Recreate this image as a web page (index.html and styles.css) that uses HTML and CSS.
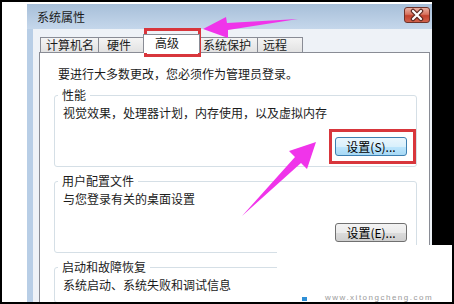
FILE: index.html
```html
<!DOCTYPE html>
<html lang="zh-CN">
<head>
	<meta charset="UTF-8">
	<title>系统属性</title>
	<link rel="stylesheet" href="styles.css">
</head>
<body>
	<div class="shot">
		<div class="canvas">
			<div class="gutter"></div>

			<div class="window">
				<div class="titlebar">
					<span class="title">系统属性</span>
					<span class="close">
						<svg width="24" height="14" viewBox="0 0 24 14">
							<path d="M8 3 L16 11 M16 3 L8 11" stroke="#5b2720" stroke-width="4.5" stroke-linecap="round"/>
							<path d="M8 3 L16 11 M16 3 L8 11" stroke="#fff" stroke-width="2.2" stroke-linecap="round"/>
						</svg>
					</span>
				</div>

				<div class="body">
					<div class="tabs">
						<span class="tab t1">计算机名</span>
						<span class="tab t2">硬件</span>
						<span class="tab on">高级</span>
						<span class="tab t4">系统保护</span>
						<span class="tab t5">远程</span>
					</div>

					<div class="panel">
						<p class="intro">要进行大多数更改，您必须作为管理员登录。</p>

						<fieldset class="group">
							<legend>性能</legend>
							<p>视觉效果，处理器计划，内存使用，以及虚拟内存</p>
							<button class="btn hot">设置(S)...</button>
						</fieldset>

						<fieldset class="group">
							<legend>用户配置文件</legend>
							<p>与您登录有关的桌面设置</p>
							<button class="btn">设置(E)...</button>
						</fieldset>

						<fieldset class="group">
							<legend>启动和故障恢复</legend>
							<p>系统启动、系统失败和调试信息</p>
						</fieldset>
					</div>
				</div>
			</div>

			<div class="desk"></div>

			<!-- annotations drawn on top of the screenshot -->
			<div class="mark m1"></div>
			<div class="mark m2"></div>

			<svg class="arrows" width="450" height="300" viewBox="2 2 450 300">
				<polygon points="203,29 226,17 227,23 298,19 228,30 228,38" fill="#f034ea"/>
				<polygon points="316,142 307,169 301,163 242,216 295,157 289,151" fill="#f034ea"/>
			</svg>

			<div class="stamp">
				<span class="logo"></span>
				<span class="site">www.xitongcheng.com</span>
			</div>
		</div>
	</div>
</body>
</html>
```

FILE: styles.css
```css
* {
	box-sizing: border-box;
}
body {
	margin: 0;
	background: #000;
	font: 12px/14px "Noto Sans CJK SC", sans-serif;
	color: #1b1b1b;
}
p {
	margin: 0;
}

.shot { width: 454px; height: 304px; padding: 2px; background: #000; }
.canvas { position: relative; width: 450px; height: 300px; background: #fff; display: flex; overflow: hidden; }
.gutter { width: 25px; flex: none; }
.desk { flex: 1; background: #000; }

.window { width: 405px; flex: none; margin-top: 2px; display: flex; flex-direction: column; }

.titlebar {
	height: 25px;
	flex: none;
	display: flex;
	justify-content: space-between;
	align-items: flex-start;
	padding: 0 2px 0 10px;
	background: linear-gradient(#a7bfd9, #c5d7eb);
}
.title { margin-top: 6px; }
.close {
	width: 26px;
	height: 16px;
	margin-top: 3px;
	display: flex;
	align-items: center;
	justify-content: center;
	border: 1px solid #6e3229;
	border-radius: 3px;
	background: linear-gradient(#eab0a2, #d7735f 45%, #c2412d 55%, #d0624c);
}

.body {
	flex: 1;
	display: flex;
	flex-direction: column;
	background: #eef2f7;
	border-left: 6px solid #b8cee6;
	padding: 0 2px 0 6px;
}

.tabs { display: flex; align-items: flex-end; padding: 5px 0 0 1px; }
.tab {
	height: 15px;
	border: 1px solid #898c95;
	border-bottom: 0;
	margin-left: -1px;
	background: linear-gradient(#f4f4f4, #e2e2e2);
	white-space: nowrap;
}
.t1 { width: 59px; margin-left: 0; padding-left: 5px; }
.t2 { width: 47px; padding-left: 8px; }
.t4 { width: 60px; margin-left: -2px; padding-left: 4px; }
.t5 { width: 46px; padding-left: 5px; }
.tab.on {
	position: relative;
	z-index: 1;
	width: 57px;
	height: 19px;
	margin: 0 0 -1px -2px;
	padding: 1px 0 0 11px;
	background: #fff;
}

.panel {
	flex: 1;
	background: #fff;
	border: 1px solid #898c95;
	padding: 14px 12px 0 14px;
}
.intro { margin-left: 4px; }

.group {
	margin: 7px 0 0;
	padding: 4px 9px 10px 8px;
	border: 1px solid #d5dfe6;
	border-radius: 3px;
	min-width: 0;
}
.group legend { padding: 0 4px; margin-left: -5px; }

.btn {
	display: block;
	width: 72px;
	height: 19px;
	margin: 17px 0 0 auto;
	padding: 0;
	font: inherit;
	line-height: 17px;
	color: #000;
	border: 1px solid #707070;
	border-radius: 3px;
	background: linear-gradient(#f3f3f3, #ebebeb 50%, #dcdcdc 50%, #cfcfcf);
}
.btn.hot {
	border-color: #3c7fb1;
	background: linear-gradient(#eaf6fd, #d9f0fc 50%, #bee6fd 50%, #a7d9f5);
}

.mark { position: absolute; border: 3px solid #d8363c; }
.m1 { left: 142px; top: 26px; width: 57px; height: 29px; }
.m2 { left: 327px; top: 127px; width: 87px; height: 35px; }

.arrows { position: absolute; left: 0; top: 0; }

.stamp {
	position: absolute;
	left: 275px;
	top: 243px;
	right: 0;
	bottom: 0;
	background: #fff;
	display: flex;
	align-items: flex-start;
	padding: 48px 0 0 25px;
	gap: 18px;
}
.logo { width: 5px; height: 4px; margin-top: 4px; background: #2f8fd6; }
.site { font: 8px/9px "Liberation Sans", sans-serif; color: #9a9a9a; letter-spacing: 1.5px; }
```
